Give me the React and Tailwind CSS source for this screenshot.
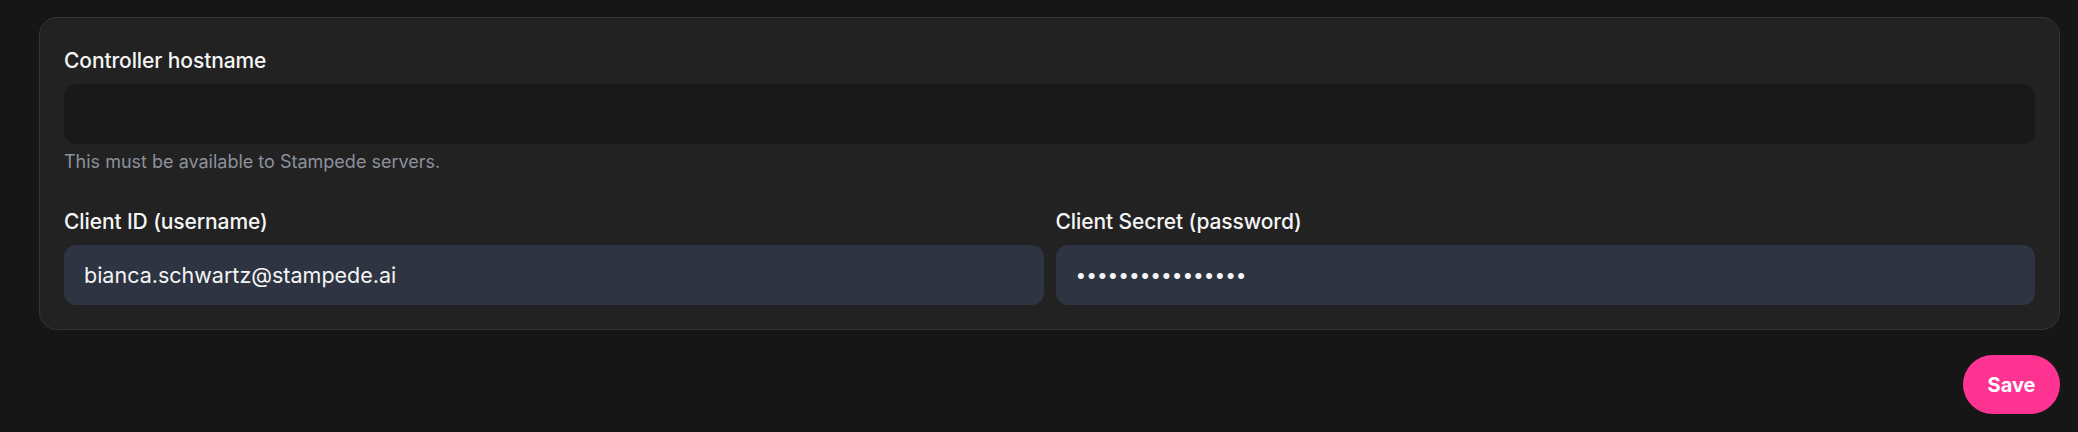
import React from 'react';

const FONT = { fontFamily: 'Inter, "Noto Sans", sans-serif' };

const Field = ({ label, children, hint }) => (
  <div className="flex flex-col">
    <label className="text-[21px] leading-[28px] font-medium text-[#f5f5f5] tracking-[-0.1px]">{label}</label>
    <div className="mt-[9px]">{children}</div>
    {hint && <p className="mt-[5px] text-[18px] leading-[25px] text-[#8d919b]">{hint}</p>}
  </div>
);

export default function App() {
  return (
    <div className="min-h-[432px] w-full bg-[#161616] pt-[17px] pl-[39px] pr-[18px]" style={FONT}>
      <div className="rounded-[18px] border border-[#353535] bg-[#222222] px-6 pt-[29px] pb-6">
        <Field label="Controller hostname" hint="This must be available to Stampede servers.">
          <input
            type="text"
            className="block h-[60px] w-full rounded-[12px] bg-[#191919] px-5 text-[22px] text-[#f5f5f5] outline-none"
          />
        </Field>

        <div className="mt-[34px] grid grid-cols-2 gap-3">
          <Field label="Client ID (username)">
            <input
              type="text"
              readOnly
              defaultValue="bianca.schwartz@stampede.ai"
              className="block h-[60px] w-full rounded-[12px] bg-[#2e3442] px-5 text-[21.5px] text-[#f5f5f5] outline-none"
            />
          </Field>
          <Field label="Client Secret (password)">
            <input
              type="password"
              readOnly
              defaultValue="stampedesecret16"
              className="block h-[60px] w-full rounded-[12px] bg-[#2e3442] px-5 text-[19px] text-[#f5f5f5] outline-none"
            />
          </Field>
        </div>
      </div>

      <div className="mt-[25px] flex justify-end">
        <button className="h-[59px] w-[97px] rounded-full bg-[#ff3392] text-[20px] font-bold text-white">
          Save
        </button>
      </div>
    </div>
  );
}
